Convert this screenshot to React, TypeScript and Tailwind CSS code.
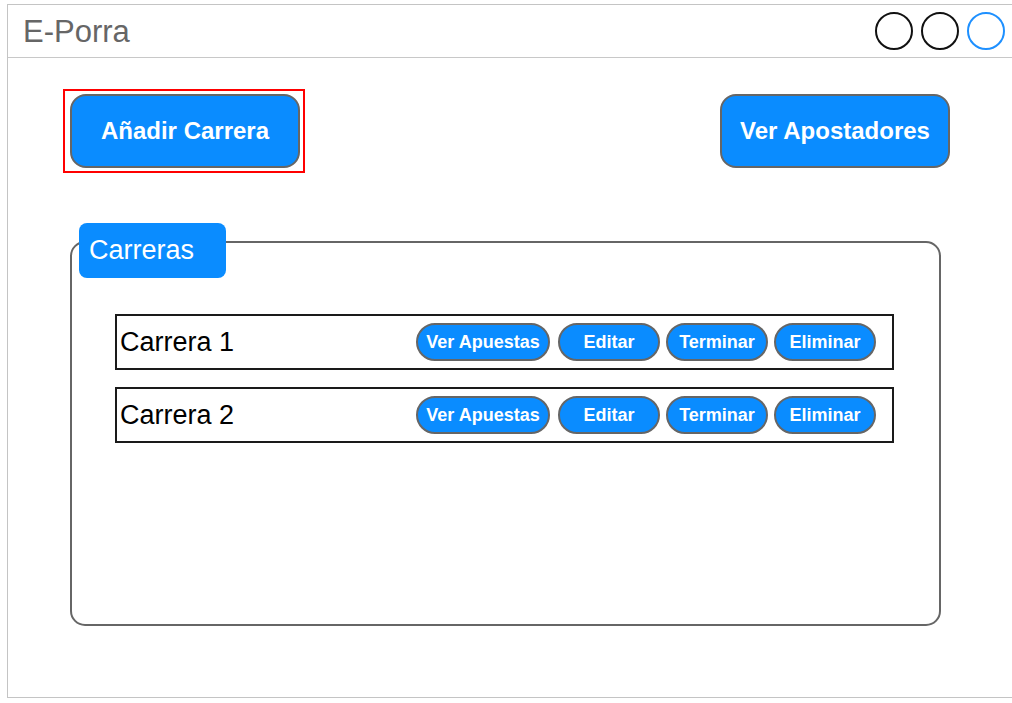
import React from "react";

const font = { fontFamily: '"Liberation Sans", Arial, sans-serif' };

function SmallBtn({ label, wide }: { label: string; wide?: boolean }) {
  return (
    <div
      className={`${wide ? "w-[134px]" : "w-[102px]"} h-[38px] rounded-full bg-[#0a8cff] border-2 border-[#666666] flex items-center justify-center text-white font-bold text-[18px] leading-none`}
    >
      {label}
    </div>
  );
}

function Row({ name }: { name: string }) {
  return (
    <div className="h-[56px] border-2 border-[#1a1a1a] flex items-center justify-between pl-[3px] pr-[16px]">
      <span className="text-[27px] text-black leading-none">{name}</span>
      <div className="flex items-center">
        <SmallBtn label="Ver Apuestas" wide />
        <div className="w-[8px]" />
        <div className="flex gap-[6px]">
          <SmallBtn label="Editar" />
          <SmallBtn label="Terminar" />
          <SmallBtn label="Eliminar" />
        </div>
      </div>
    </div>
  );
}

export default function App() {
  return (
    <div className="w-[1012px] h-[703px] bg-white pt-[4px] pl-[7px] overflow-hidden" style={font}>
      <div className="h-[694px] border-t border-l border-b border-[#c4c4c4] flex flex-col">
        <div className="h-[53px] shrink-0 border-b border-[#c8c8c8] flex items-center justify-between pl-[15px] pr-[7px]">
          <span className="text-[31px] text-[#666666] leading-none">E-Porra</span>
          <div className="flex gap-[8px]">
            <div className="w-[38px] h-[38px] rounded-full border-2 border-[#111111]" />
            <div className="w-[38px] h-[38px] rounded-full border-2 border-[#111111]" />
            <div className="w-[38px] h-[38px] rounded-full border-2 border-[#1e90ff]" />
          </div>
        </div>

        <div className="flex items-start justify-between pl-[55px] pr-[62px] mt-[31px]">
          <div className="border-2 border-[#ff0000] pt-[3px] pb-[3px] pl-[5px] pr-[3px]">
            <div className="w-[230px] h-[74px] rounded-[16px] bg-[#0a8cff] border-2 border-[#666666] flex items-center justify-center text-white font-bold text-[24px]">
              Añadir Carrera
            </div>
          </div>
          <div className="mt-[5px] w-[230px] h-[74px] rounded-[16px] bg-[#0a8cff] border-2 border-[#666666] flex items-center justify-center text-white font-bold text-[24px]">
            Ver Apostadores
          </div>
        </div>

        <div className="relative ml-[62px] mt-[68px] w-[871px] h-[385px] border-2 border-[#666666] rounded-[15px] pt-[71px] pl-[43px] pr-[45px]">
          <div className="absolute -top-[20px] left-[7px] w-[147px] h-[55px] rounded-[8px] bg-[#0a8cff] flex items-center pl-[10px] text-white text-[27px]">
            Carreras
          </div>
          <div className="flex flex-col gap-[17px]">
            <Row name="Carrera 1" />
            <Row name="Carrera 2" />
          </div>
        </div>
      </div>
    </div>
  );
}
